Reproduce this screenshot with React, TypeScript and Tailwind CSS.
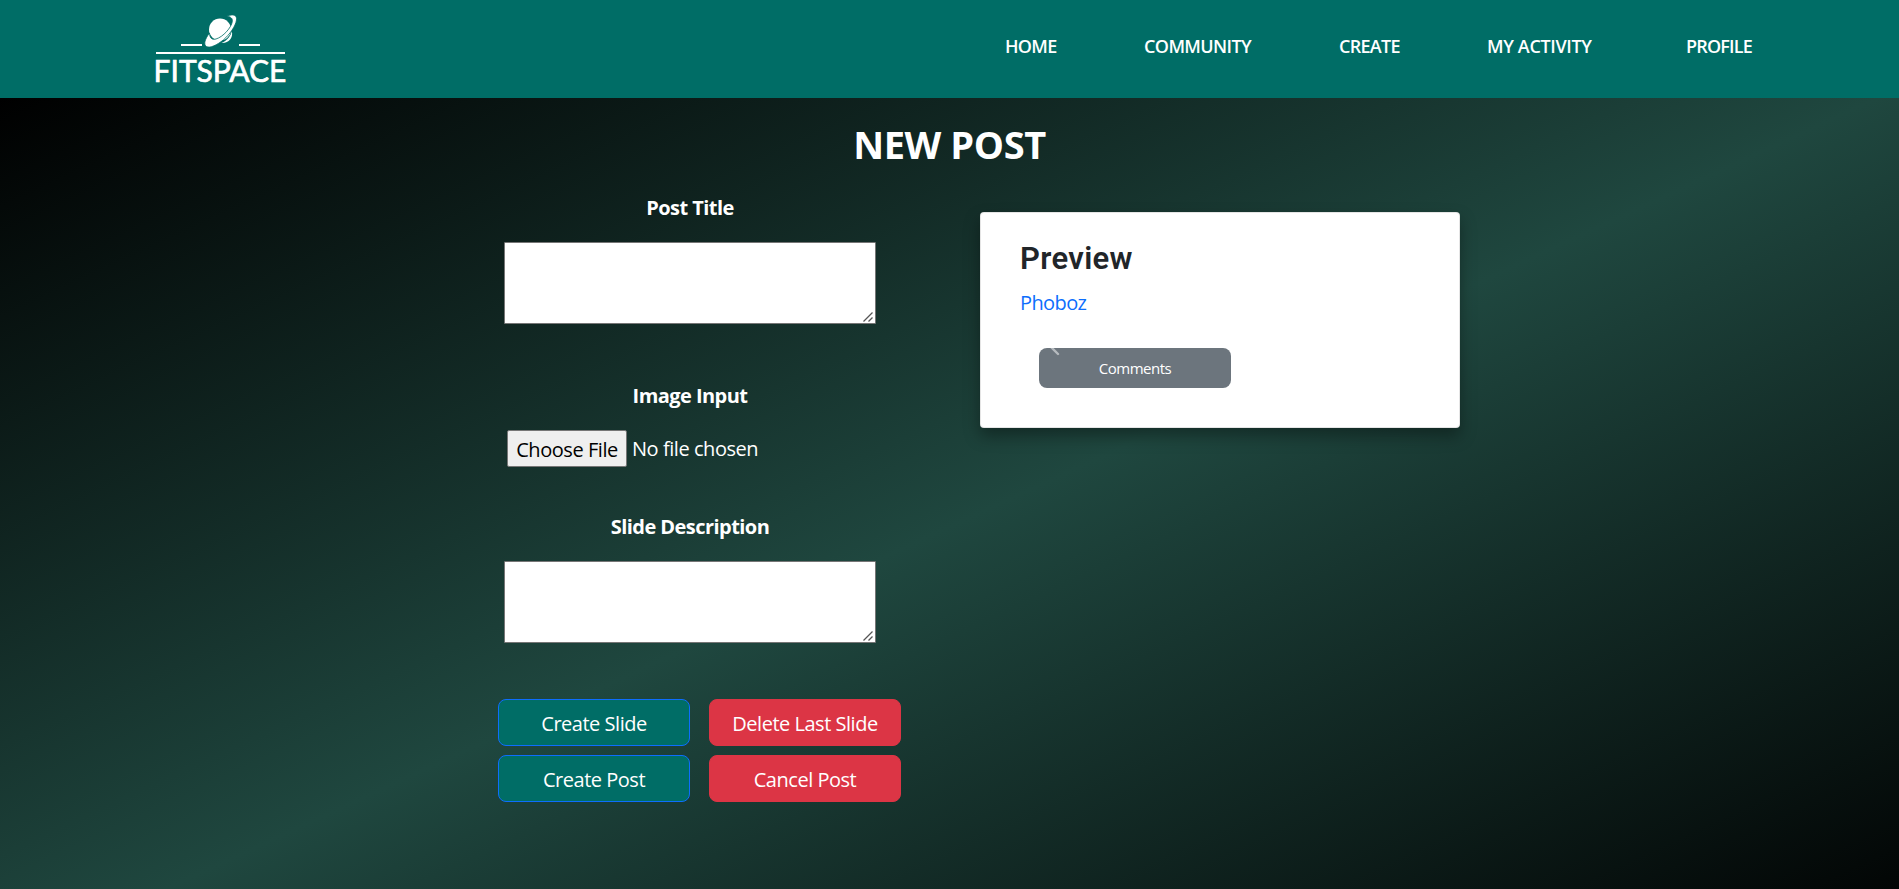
import type { ReactNode } from 'react';

function Logo() {
  return (
    <svg viewBox="0 0 140 50" className="block h-[50px] w-[140px] shrink-0" fill="none">
      <g stroke="#fff" strokeWidth="2">
        <path d="M31 36H52" />
        <path d="M89 36H110" />
        <path d="M6 44H135" />
      </g>
      <path d="M71.500 34C77.500 31.500 81 26.500 81.800 22C83.500 29 78.500 34.500 71.500 34Z" fill="#fff" />
      <circle cx="70" cy="20.500" r="11" fill="#fff" />
      <path
        d="M77 7C83 4.800 87.300 5.800 86.500 11C85.500 17.500 79.500 25.500 73.500 30.800C67 36 60 39.500 56.500 37.500C53 35.500 55.300 29.500 59.500 24C59.800 29 61.500 31 66 30C73 28 81.500 18.500 82.300 12.500C82.800 9.500 81 8 77 7Z"
        fill="#fff"
        stroke="#006d66"
        strokeWidth="0.800"
      />
    </svg>
  );
}

function Label({ children, cls }: { children: ReactNode; cls: string }) {
  return (
    <h2 className={`text-center text-[20px] leading-[30px] font-bold tracking-[-0.55px] text-white ${cls}`}>{children}</h2>
  );
}

function TextArea() {
  return (
    <div className="relative mt-[19px] h-[82px] w-[372px]">
      <textarea className="block h-full w-full resize-none rounded-[1px] border border-[#767676] bg-white" />
      <svg viewBox="0 0 10 10" className="pointer-events-none absolute right-[3px] bottom-[2px] size-[10px]" stroke="#555" strokeWidth="1.300">
        <path d="M0.500 9.500L9.500 0.500M5.500 9.500L9.500 5.500" />
      </svg>
    </div>
  );
}

function Button({ children, cls }: { children: ReactNode; cls: string }) {
  return (
    <button className={`h-[47px] w-48 rounded-lg border pt-0.5 text-[20px] leading-[30px] tracking-[-0.48px] text-white ${cls}`}>
      {children}
    </button>
  );
}

export default function App() {
  return (
    <div className="flex h-[889px] w-[1899px] flex-col overflow-hidden font-['Open_Sans','Noto_Sans',sans-serif]">
      <header className="flex h-[98px] shrink-0 bg-[#006d66]">
        <div className="ml-[150px] flex w-[140px] flex-col pt-[9px]">
          <Logo />
          <div className="-mt-[7px] flex justify-center font-['Lato',sans-serif] text-[30px] leading-9 text-white [-webkit-text-stroke:0.7px_white]">
            FITSPACE
          </div>
        </div>
        <nav className="ml-[715px] flex pt-[33px] text-[18px] leading-[26px] font-semibold whitespace-nowrap text-white">
          <a className="w-[139px] tracking-[-0.7px]">HOME</a>
          <a className="w-[195px] tracking-[-0.6px]">COMMUNITY</a>
          <a className="w-[148px] tracking-[-0.7px]">CREATE</a>
          <a className="w-[199px] tracking-[-0.35px]">MY ACTIVITY</a>
          <a className="tracking-[-0.8px]">PROFILE</a>
        </nav>
      </header>
      <div className="h-[858px] shrink-0 bg-[linear-gradient(155.2deg,#000_0%,#1f473f_50%,#000_100%)] pt-[22px]">
        <h1 className="text-center text-[38px] leading-12 font-bold tracking-[-0.4px] text-white">NEW POST</h1>
        <main className="flex items-start">
          <form className="ml-[498px] flex w-[403px] flex-col">
            <div className="mr-[19px] flex flex-col px-1.5">
              <Label cls="mt-[25px]">Post Title</Label>
              <TextArea />
              <Label cls="mt-[57px]">Image Input</Label>
              <div className="mt-[19px] ml-[3px] flex h-[37px] items-center gap-[5px] text-[20px] leading-[30px] tracking-[-0.45px] whitespace-nowrap text-white">
                <button
                  type="button"
                  className="h-[37px] w-[120px] rounded-[2px] border border-[#767676] bg-[#efefef] pt-[3px] text-black"
                >
                  Choose File
                </button>
                <span>No file chosen</span>
              </div>
              <Label cls="mt-[45px]">Slide Description</Label>
              <TextArea />
            </div>
            <div className="mt-14 grid grid-cols-[192px_192px] gap-x-[19px] gap-y-[9px]">
              <Button cls="border-[#0d6efd] bg-[#006d66]">Create Slide</Button>
              <Button cls="border-[#dc3545] bg-[#dc3545]">Delete Last Slide</Button>
              <Button cls="border-[#0d6efd] bg-[#006d66]">Create Post</Button>
              <Button cls="border-[#dc3545] bg-[#dc3545]">Cancel Post</Button>
            </div>
          </form>
          <section className="mt-[44px] ml-[79px] h-[216px] w-[480px] rounded border border-black/10 bg-white pt-[27px] pl-[39px] shadow-[0_8px_16px_rgba(0,0,0,0.35)]">
            <h2 className="font-['Roboto',sans-serif] text-[31px] leading-[38px] font-semibold tracking-[0.35px] text-[#212529]">
              Preview
            </h2>
            <a className="mt-[10px] block text-[20px] leading-[30px] tracking-[-0.6px] text-[#0d6efd]">Phoboz</a>
            <button className="relative mt-[30px] ml-[19px] flex h-10 w-48 items-center justify-center overflow-hidden rounded-lg bg-[#6c757d] text-[15px] tracking-[-0.5px] text-white">
              <svg viewBox="0 0 12 8" className="absolute top-0 left-[10px] h-2 w-3" stroke="#b5babe" strokeWidth="2.400" strokeLinecap="round">
                <path d="M1 -2L9 6" />
              </svg>
              Comments
            </button>
          </section>
        </main>
      </div>
    </div>
  );
}
